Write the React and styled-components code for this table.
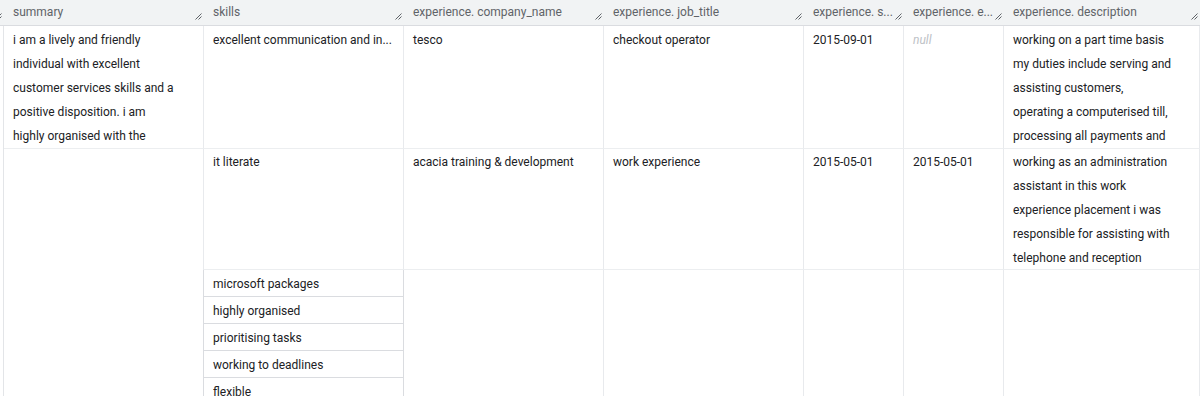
import React from "react";
import styled, { createGlobalStyle } from "styled-components";

const GlobalStyle = createGlobalStyle`
  html, body {
    margin: 0;
    padding: 0;
    background: #ffffff;
    font-family: Roboto, "Liberation Sans", sans-serif;
  }
`;

const COLS = "4px 200px 200px 200px 200px 100px 100px 196px";

const Grid = styled.div`
  display: grid;
  grid-template-columns: ${COLS};
  width: 1200px;
  height: 396px;
  overflow: hidden;
  grid-template-rows: 26px 123px 121px 1fr;
`;

const HeadCell = styled.div`
  position: relative;
  box-sizing: border-box;
  height: 26px;
  background: #f1f3f4;
  border-bottom: 1px solid #dadce0;
  padding: 0 18px 0 9px;
  font-size: 12px;
  line-height: 25px;
  color: #5f6368;
  white-space: nowrap;
  overflow: hidden;
`;

const Handle = styled.svg`
  position: absolute;
  right: 2px;
  bottom: 5px;
  width: 7px;
  height: 7px;
`;

const Cell = styled.div`
  box-sizing: border-box;
  border-right: 1px solid #e8eaed;
  border-bottom: ${(p) => (p.$noBottom ? "none" : "1px solid #eceef0")};
  padding: ${(p) => p.$pt || 0}px 24px 0 9px;
  font-size: 12px;
  line-height: 24px;
  color: #202124;
  overflow: hidden;
  white-space: ${(p) => (p.$nowrap ? "nowrap" : "normal")};
`;

const NullText = styled.span`
  color: #bdc1c6;
  font-style: italic;
`;

const SubList = styled.div`
  border-right: 1px solid #dadce0;
  border-left: 1px solid #dadce0;
  margin-left: -1px;
  overflow: hidden;
`;

const SubItem = styled.div`
  box-sizing: border-box;
  height: 27px;
  border-bottom: 1px solid #dadce0;
  padding: 1px 9px 0;
  font-size: 12px;
  line-height: 26px;
  color: #202124;
  white-space: nowrap;
`;

const LeftSpacer = styled.div`
  border-right: 1px solid #e3e5e8;
`;

function ResizeMark() {
  return (
    <Handle viewBox="0 0 7 7">
      <path d="M0.5 6.5 L6.5 0.5 M3.5 6.5 L6.5 3.5" stroke="#5f6368" strokeWidth="1" fill="none" />
    </Handle>
  );
}

const headers = [
  "summary",
  "skills",
  "experience. company_name",
  "experience. job_title",
  "experience. s...",
  "experience. e...",
  "experience. description",
];

const summary =
  "i am a lively and friendly individual with excellent customer services skills and a positive disposition. i am highly organised with the ability to work well under pressure";

const rows = [
  {
    pt: 2,
    skills: "excellent communication and in...",
    company: "tesco",
    job: "checkout operator",
    start: "2015-09-01",
    end: null,
    desc: "working on a part time basis my duties include serving and assisting customers, operating a computerised till, processing all payments and handling cash",
  },
  {
    pt: 1,
    skills: "it literate",
    company: "acacia training & development",
    job: "work experience",
    start: "2015-05-01",
    end: "2015-05-01",
    desc: "working as an administration assistant in this work experience placement i was responsible for assisting with telephone and reception duties",
  },
];

const moreSkills = [
  "microsoft packages",
  "highly organised",
  "prioritising tasks",
  "working to deadlines",
  "flexible",
  "reliable",
];

export default function App() {
  return (
    <>
      <GlobalStyle />
      <Grid>
        <HeadCell style={{ padding: 0 }}>
          <ResizeMark />
        </HeadCell>
        {headers.map((h) => (
          <HeadCell key={h}>
            {h}
            <ResizeMark />
          </HeadCell>
        ))}

        {rows.map((r, i) => (
          <React.Fragment key={i}>
            <LeftSpacer />
            <Cell $pt={r.pt} $noBottom={i === 1}>{i === 0 ? summary : ""}</Cell>
            <Cell $pt={r.pt} $nowrap>{r.skills}</Cell>
            <Cell $pt={r.pt}>{r.company}</Cell>
            <Cell $pt={r.pt}>{r.job}</Cell>
            <Cell $pt={r.pt}>{r.start}</Cell>
            <Cell $pt={r.pt}>{r.end ? r.end : <NullText>null</NullText>}</Cell>
            <Cell $pt={r.pt}>{r.desc}</Cell>
          </React.Fragment>
        ))}

        <LeftSpacer />
        <Cell $noBottom style={{ borderRight: "none" }} />
        <SubList>
          {moreSkills.map((s) => (
            <SubItem key={s}>{s}</SubItem>
          ))}
        </SubList>
        <Cell $noBottom />
        <Cell $noBottom />
        <Cell $noBottom />
        <Cell $noBottom />
        <Cell $noBottom />
      </Grid>
    </>
  );
}
